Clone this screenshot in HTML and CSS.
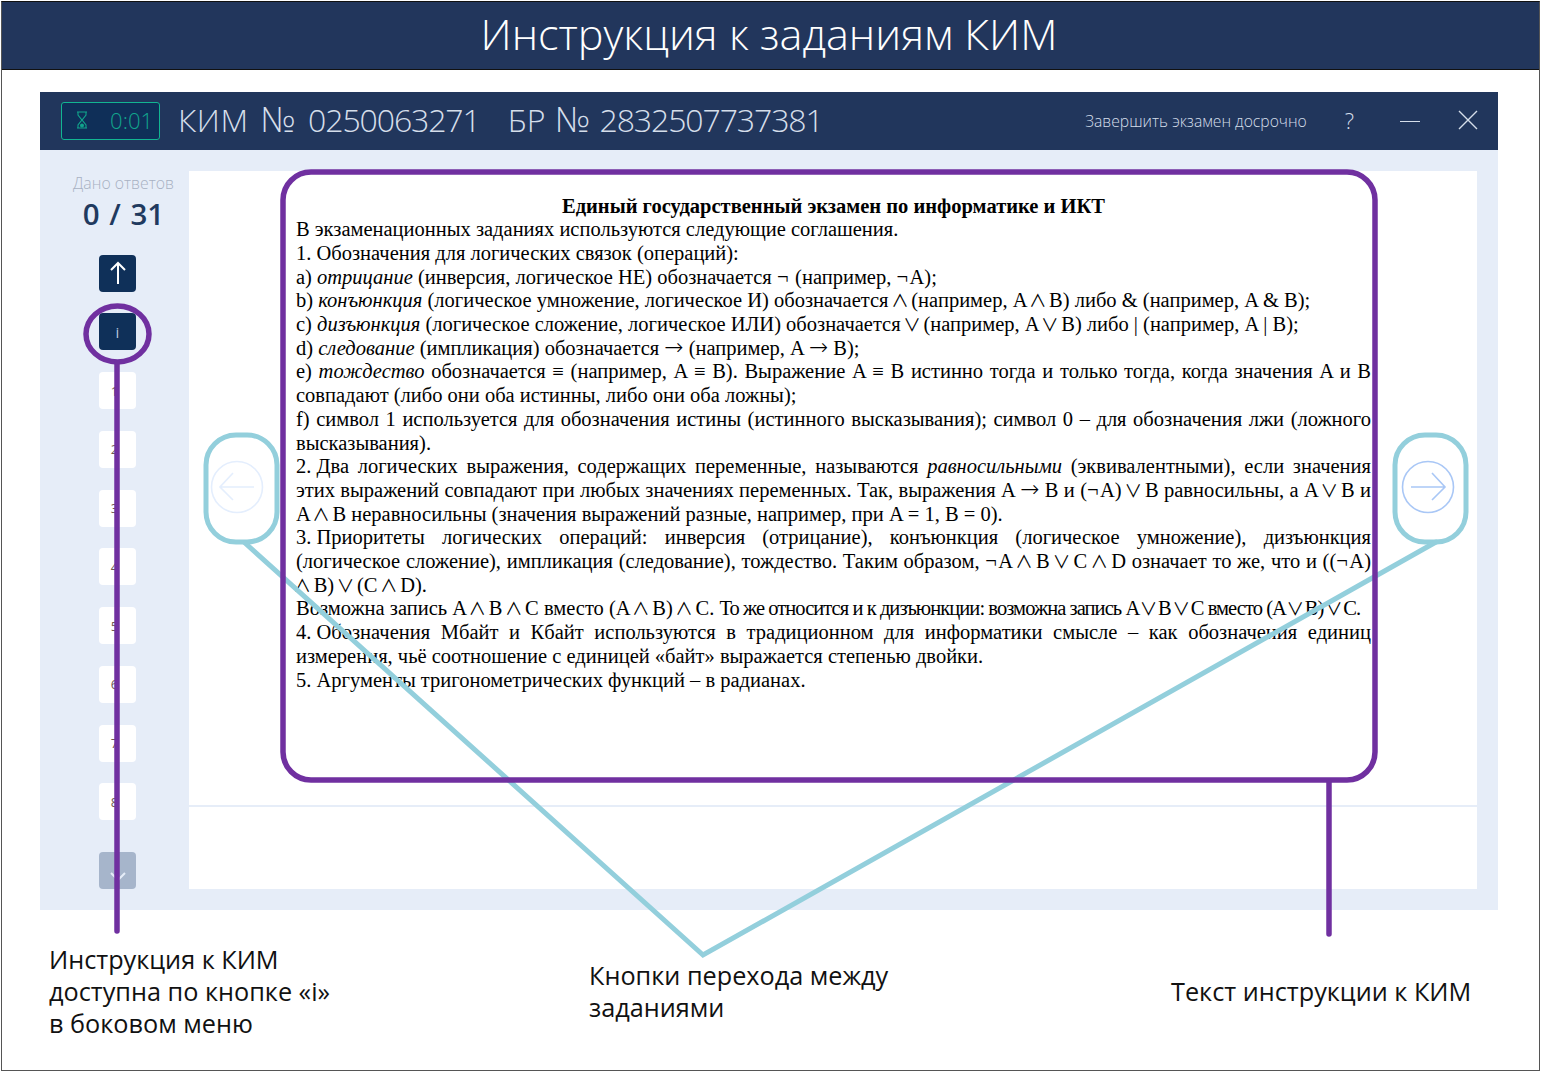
FILE: index.html
```html
<!DOCTYPE html>
<html lang="ru">
<head>
  <meta charset="UTF-8">
  <title>Инструкция к заданиям КИМ</title>
  <link rel="stylesheet" href="styles.css">
</head>
<body>
<div class="slide">
  <h1 class="slide-title">Инструкция к заданиям КИМ</h1>

  <div class="app">
    <header class="app-head">
      <div class="timer">
        <svg class="hourglass" width="14" height="18" viewBox="0 0 14 18" fill="none" stroke="#12a58c" stroke-width="1.1">
          <path d="M2 1h10M2 17h10M3 1v3l4 5 4-5V1M3 17v-3l4-5 4 5v3"/>
          <circle cx="7" cy="14.5" r="1.4" fill="#12a58c"/>
        </svg>
        <span>0:01</span>
      </div>
      <div class="kim-id">КИМ <span class="no">№</span> <span class="num">0250063271</span></div>
      <div class="kim-id kim-br">БР <span class="no">№</span> <span class="num">2832507737381</span></div>
      <a class="finish">Завершить экзамен досрочно</a>
      <span class="help">?</span>
      <span class="minimize"></span>
      <svg class="close" width="20" height="20" viewBox="0 0 20 20" stroke="#d5deea" stroke-width="1.4">
        <path d="M1 1l18 18M19 1L1 19"/>
      </svg>
    </header>

    <div class="app-body">
      <aside class="sidebar">
        <div class="answers-label">Дано ответов</div>
        <div class="answers-count">0 / 31</div>
        <div class="task-list">
          <div class="task task-dark">
            <svg width="18" height="24" viewBox="0 0 18 24" fill="none" stroke="#fff" stroke-width="2">
              <path d="M9 23V2M2 9l7-7 7 7"/>
            </svg>
          </div>
          <div class="task task-dark task-info">i</div>
          <div class="task task-num">1</div>
          <div class="task task-num">2</div>
          <div class="task task-num">3</div>
          <div class="task task-num">4</div>
          <div class="task task-num">5</div>
          <div class="task task-num">6</div>
          <div class="task task-num">7</div>
          <div class="task task-num">8</div>
          <div class="task task-down">
            <svg width="16" height="10" viewBox="0 0 16 10" fill="none" stroke="#e6edf8" stroke-width="2">
              <path d="M1 1l7 7 7-7"/>
            </svg>
          </div>
        </div>
      </aside>

      <main class="content">
        <div class="instruction">
          <div class="doc-title">Единый государственный экзамен по информатике и ИКТ</div>
          <div>В экзаменационных заданиях используются следующие соглашения.</div>
          <div>1.&#8197;Обозначения для логических связок (операций):</div>
          <div>a) <i>отрицание</i> (инверсия, логическое НЕ) обозначается <span class="neg">¬</span> (например, <span class="neg">¬</span>A);</div>
          <div>b) <i>конъюнкция</i> (логическое умножение, логическое И) обозначается <span class="op">∧</span> (например, A <span class="op">∧</span> B) либо &amp; (например, A &amp; B);</div>
          <div>c) <i>дизъюнкция</i> (логическое сложение, логическое ИЛИ) обозначается <span class="op">∨</span> (например, A <span class="op">∨</span> B) либо | (например, A | B);</div>
          <div>d) <i>следование</i> (импликация) обозначается <span class="arrow">→</span> (например, A <span class="arrow">→</span> B);</div>
          <div class="just">e) <i>тождество</i> обозначается ≡ (например, A ≡ B). Выражение A ≡ B истинно тогда и только тогда, когда значения A и B</div>
          <div>совпадают (либо они оба истинны, либо они оба ложны);</div>
          <div class="just">f) символ 1 используется для обозначения истины (истинного высказывания); символ 0 – для обозначения лжи (ложного</div>
          <div>высказывания).</div>
          <div class="just">2.&#8197;Два логических выражения, содержащих переменные, называются <i>равносильными</i> (эквивалентными), если значения</div>
          <div class="just">этих выражений совпадают при любых значениях переменных. Так, выражения A <span class="arrow">→</span> B и (<span class="neg">¬</span>A) <span class="op">∨</span> B равносильны, а A <span class="op">∨</span> B и</div>
          <div>A <span class="op">∧</span> B неравносильны (значения выражений разные, например, при A = 1, B = 0).</div>
          <div class="just">3.&#8197;Приоритеты логических операций: инверсия (отрицание), конъюнкция (логическое умножение), дизъюнкция</div>
          <div class="just">(логическое сложение), импликация (следование), тождество. Таким образом, <span class="neg">¬</span>A <span class="op">∧</span> B <span class="op">∨</span> C <span class="op">∧</span> D означает то же, что и ((<span class="neg">¬</span>A)</div>
          <div><span class="op">∧</span> B) <span class="op">∨</span> (C <span class="op">∧</span> D).</div>
          <div>Возможна запись A <span class="op">∧</span> B <span class="op">∧</span> C вместо (A <span class="op">∧</span> B) <span class="op">∧</span> C. <span class="tight">То же относится и к дизъюнкции: возможна запись A <span class="op">∨</span> B <span class="op">∨</span> C вместо (A <span class="op">∨</span> B) <span class="op">∨</span> C.</span></div>
          <div class="just">4.&#8197;Обозначения Мбайт и Кбайт используются в традиционном для информатики смысле – как обозначения единиц</div>
          <div>измерения, чьё соотношение с единицей «байт» выражается степенью двойки.</div>
          <div>5.&#8197;Аргументы тригонометрических функций – в радианах.</div>
        </div>
        <svg class="nav-btn nav-prev" width="54" height="54" viewBox="0 0 54 54" fill="none" stroke="#e4eefd" stroke-width="1.6">
          <circle cx="27" cy="27" r="25.5"/>
          <path d="M44 27H10M23 13L10 27l13 13"/>
        </svg>
        <svg class="nav-btn nav-next" width="54" height="54" viewBox="0 0 54 54" fill="none" stroke="#a9c7f6" stroke-width="1.6">
          <circle cx="27" cy="27" r="25.5"/>
          <path d="M10 27h34M31 13l13 14-13 13"/>
        </svg>
      </main>
    </div>
  </div>

  <div class="captions">
    <p class="caption caption-left">Инструкция к КИМ<br>доступна по кнопке «i»<br>в боковом меню</p>
    <p class="caption caption-mid">Кнопки перехода между<br>заданиями</p>
    <p class="caption caption-right">Текст инструкции к КИМ</p>
  </div>

  <!-- callouts drawn over the screenshot -->
  <svg class="callouts" width="1538" height="1069" viewBox="0 0 1538 1069" fill="none" stroke-width="5" stroke-linecap="round">
    <g stroke="#93cfdc">
      <rect x="204" y="433" width="71" height="107" rx="30"/>
      <rect x="1393" y="433" width="71" height="107" rx="30"/>
      <path d="M243 541L701 953L1434 540"/>
    </g>
    <g stroke="#7030a0" stroke-width="5.5">
      <rect x="281" y="170" width="1092" height="608" rx="28"/>
      <ellipse cx="115.5" cy="332" rx="31.5" ry="28"/>
      <path d="M115 361V929M1327 780V932"/>
    </g>
  </svg>
</div>
</body>
</html>
```

FILE: styles.css
```css
body {
  margin: 0;
  background: #fff;
}

.slide {
  position: relative;
  box-sizing: border-box;
  width: 1539px;
  height: 1070px;
  margin: 1px 0 0 1px;
  border: 1px solid #555;
  border-top-color: #111;
  font-family: "Open Sans", sans-serif;
}

.slide-title {
  margin: 0;
  height: 67px;
  padding-right: 3px;
  background: #22365c;
  border-bottom: 1px solid #111;
  color: #fff;
  font-size: 43.2px;
  font-weight: 300;
  line-height: 63px;
  text-align: center;
}

.app {
  margin: 22px 0 0 38px;
  width: 1458px;
  background: #e6edf8;
}

.app-head {
  display: flex;
  align-items: center;
  height: 58px;
  padding: 0 20px 0 21px;
  background: #21365c;
  color: #d5deea;
}

.timer {
  box-sizing: border-box;
  display: flex;
  align-items: center;
  justify-content: space-between;
  width: 99px;
  height: 38px;
  padding: 0 6px 2px 13px;
  margin-top: -1px;
  margin-right: 18px;
  background: #0f2f58;
  border: 1px solid #12b592;
  border-radius: 3px;
  color: #12a58c;
  font-size: 22px;
  font-weight: 300;
}

.kim-id {
  margin-right: 28px;
  margin-top: -3px;
  font-size: 32px;
  font-weight: 300;
  letter-spacing: 0.5px;
  word-spacing: 2px;
  white-space: nowrap;
}

.kim-br {
  letter-spacing: 0;
  word-spacing: 0;
}

.kim-id .no {
  margin: 0 1px;
  font-size: 35px;
  line-height: 1;
}

.kim-id .num {
  letter-spacing: -1.1px;
}

.finish {
  margin-left: auto;
  margin-top: -1px;
  font-size: 15.7px;
  font-weight: 300;
}

.help {
  margin-left: 38px;
  margin-top: -3px;
  font-size: 22px;
  font-weight: 300;
}

.minimize {
  width: 20px;
  height: 1px;
  margin-left: 46px;
  background: #d5deea;
}

.close {
  margin-left: 38px;
  margin-top: -2px;
}

.app-body {
  display: flex;
  height: 760px;
}

.sidebar {
  box-sizing: border-box;
  width: 149px;
  padding-top: 23px;
  flex-shrink: 0;
}

.answers-label {
  padding-left: 18px;
  color: #a8b1c2;
  font-size: 15.8px;
  font-weight: 300;
  line-height: 20px;
  text-align: center;
}

.answers-count {
  padding-left: 18px;
  margin-top: 2px;
  color: #1f3a5f;
  font-size: 29.5px;
  font-weight: 600;
  line-height: 38px;
  word-spacing: 2px;
  text-align: center;
}

.task-list {
  display: flex;
  flex-direction: column;
  gap: 21.75px;
  margin: 21.5px 0 0 59px;
}

.task {
  box-sizing: border-box;
  display: flex;
  align-items: center;
  justify-content: center;
  width: 37px;
  height: 37px;
  background: #fff;
  border-radius: 4px;
  color: #6b5a50;
  font-size: 13px;
}

.task-num {
  padding-right: 6px;
}

.task-dark {
  background: #0f3059;
  color: #fff;
}

.task-info {
  color: #b8c8dc;
  font-size: 15px;
}

.task-down {
  margin-top: 10px;
  background: #a6b5cb;
  align-items: flex-end;
  padding-bottom: 7px;
}

.content {
  position: relative;
  width: 1288px;
  height: 718px;
  margin-top: 21px;
  background: #fff;
}

.instruction {
  box-sizing: border-box;
  height: 636px;
  padding: 23.5px 106px 0 107px;
  border-bottom: 2px solid #e6edf8;
  color: #000;
  font-family: "Liberation Serif", serif;
  font-size: 20.5px;
  line-height: 23.7px;
  white-space: nowrap;
}

.doc-title {
  font-weight: bold;
  text-align: center;
}

.just {
  text-align: justify;
  text-align-last: justify;
}

/* thin logic signs, as in the source document */
.op {
  margin: 0 -2.5px;
  font-family: "Noto Sans CJK SC", sans-serif;
  font-size: 17.5px;
  line-height: 0;
}

.arrow {
  font-family: "DejaVu Sans", sans-serif;
  font-size: 23px;
  font-weight: 300;
  line-height: 0;
}

.neg {
  margin-right: 1.5px;
}

.tight {
  letter-spacing: -0.94px;
}

.nav-btn {
  position: absolute;
  top: 289px;
}

.nav-prev {
  left: 21px;
}

.nav-next {
  left: 1212px;
}

.captions {
  display: flex;
  align-items: center;
  height: 96px;
  margin-top: 33px;
  padding-left: 47px;
}

.caption {
  margin: 0;
  color: #111;
  font-size: 25.25px;
  line-height: 32px;
  white-space: nowrap;
}

.caption-left {
  width: 540px;
}

.caption-mid {
  width: 582px;
}

.callouts {
  position: absolute;
  top: 0;
  left: 0;
  pointer-events: none;
}
```
